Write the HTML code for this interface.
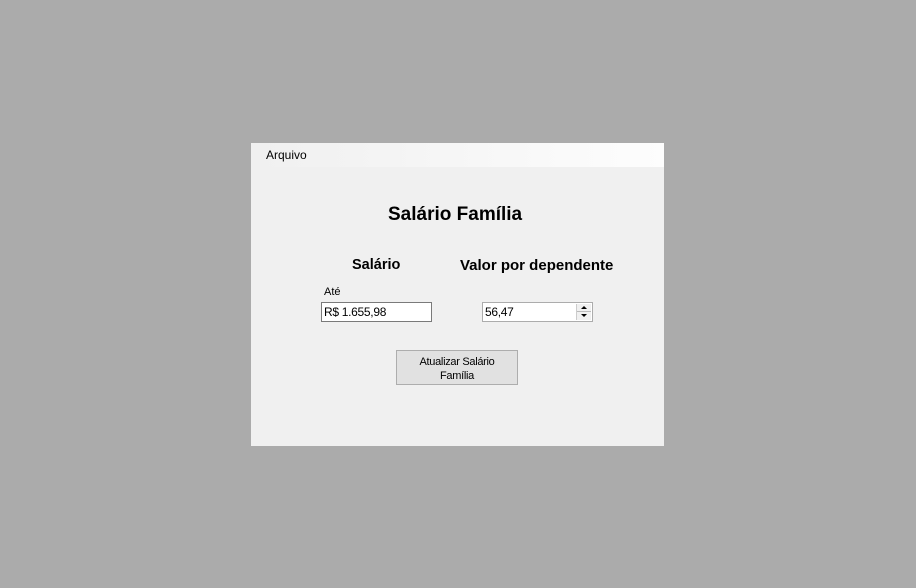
<!DOCTYPE html>
<html><head><style>
body{margin:0;width:916px;height:588px;background:#ababab;position:relative;overflow:hidden;font-family:"Liberation Sans",sans-serif;}
.win{position:absolute;left:251px;top:143px;width:413px;height:303px;background:#f0f0f0;}
.menu{position:absolute;left:0;top:0;width:413px;height:24px;background:linear-gradient(to right,#f0f0f0 0%,#f3f3f3 25%,#fdfdfd 100%);}
.t{position:absolute;white-space:nowrap;color:#000;}
.box{position:absolute;background:#fff;border:1px solid #7a7a7a;box-sizing:border-box;font-size:12px;letter-spacing:-0.3px;}
</style></head><body>
<div class="win">
<div class="menu"></div>
<div class="t" style="left:15px;top:5px;font-size:12px;">Arquivo</div>
<div class="t" style="left:137px;top:61px;font-size:19px;font-weight:bold;">Salário Família</div>
<div class="t" style="left:101px;top:114px;font-size:14.5px;font-weight:bold;">Salário</div>
<div class="t" style="left:209px;top:114px;font-size:15px;font-weight:bold;">Valor por dependente</div>
<div class="t" style="left:73px;top:143px;font-size:11px;">Até</div>
<div class="box" style="left:70px;top:159px;width:111px;height:20px;padding:2px 0 0 2px;">R$ 1.655,98</div>
<div class="box" style="left:231px;top:159px;width:111px;height:20px;padding:2px 0 0 2px;border-color:#acacac;">56,47
<div style="position:absolute;right:1px;top:1px;width:14px;height:16px;background:#f0f0f0;border-left:1px solid #ccc;">
<div style="position:absolute;left:4px;top:2px;width:0;height:0;border-left:3px solid transparent;border-right:3px solid transparent;border-bottom:3px solid #000;"></div>
<div style="position:absolute;left:0;top:7px;width:14px;height:1px;background:#bbb;"></div>
<div style="position:absolute;left:4px;top:10px;width:0;height:0;border-left:3px solid transparent;border-right:3px solid transparent;border-top:3px solid #000;"></div>
</div></div>
<div style="position:absolute;left:145px;top:207px;width:122px;height:35px;background:#e1e1e1;border:1px solid #adadad;box-sizing:border-box;font-size:11px;letter-spacing:-0.3px;text-align:center;line-height:14px;padding-top:4px;">Atualizar Salário<br>Família</div>
</div>
</body></html>
